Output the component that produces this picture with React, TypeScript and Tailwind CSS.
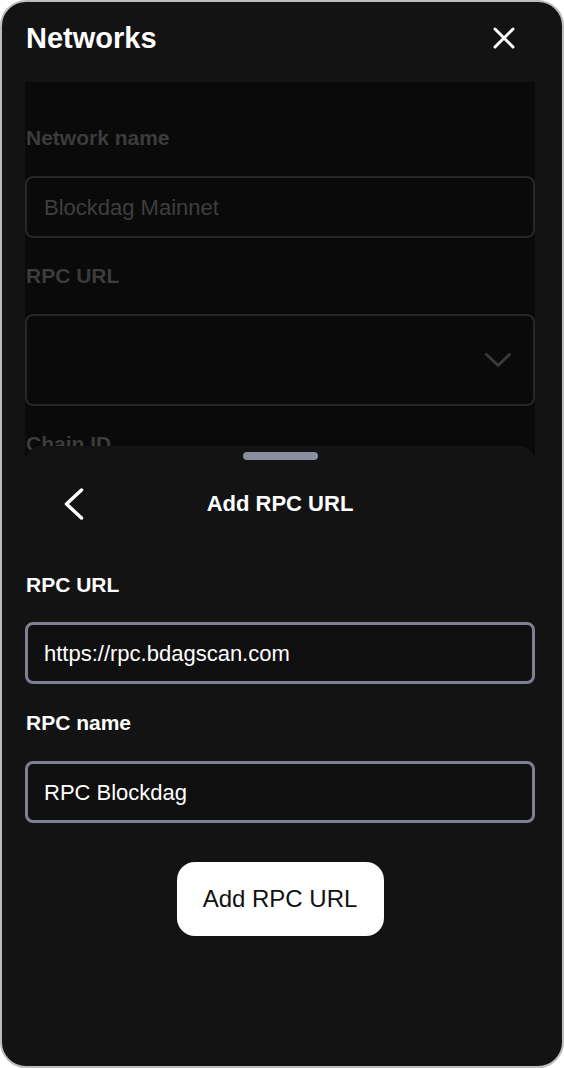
import React from 'react'

const font = { fontFamily: '"Liberation Sans", Arial, sans-serif' }

function CloseIcon() {
  return (
    <svg width="24" height="24" viewBox="0 0 24 24" fill="none" stroke="white" strokeWidth={3} strokeLinecap="round">
      <path d="M3 3 L21 21 M21 3 L3 21" />
    </svg>
  )
}

function BackIcon() {
  return (
    <svg width="22" height="34" viewBox="0 0 22 34" fill="none" stroke="white" strokeWidth={3.5} strokeLinecap="round" strokeLinejoin="round">
      <path d="M18.5 3 L3.5 17 L18.5 31" />
    </svg>
  )
}

function ChevronDown() {
  return (
    <svg width="28" height="16" viewBox="0 0 28 16" fill="none" stroke="#3a3a3c" strokeWidth={3} strokeLinecap="round" strokeLinejoin="round">
      <path d="M2.5 2.5 L14 13.5 L25.5 2.5" />
    </svg>
  )
}

export default function App() {
  return (
    <div className="w-[564px] h-[1068px] bg-white" style={font}>
      <div className="h-full rounded-[26px] border-2 border-[#bdbdbd] bg-[#131313] pl-[23px] pr-[27px] overflow-hidden">
        {/* Encabezado */}
        <header className="h-[48px] mt-[12px] flex items-center justify-between">
          <h1 className="text-[29px] font-bold text-white leading-none pl-[1px]">Networks</h1>
          <div className="mr-[19px] flex items-center">
            <CloseIcon />
          </div>
        </header>

        {/* Formulario de fondo (atenuado) */}
        <div className="mt-[20px] h-[378px] bg-[#0a0a0a] overflow-hidden pt-[43px]">
          <p className="text-[21px] leading-[26px] font-bold text-[#3c3c3c] pl-[1px]">Network name</p>
          <div className="mt-[25px] h-[62px] rounded-lg border-2 border-[#26272a] flex items-center px-[17px]">
            <span className="text-[22px] text-[#3e3e3e]">Blockdag Mainnet</span>
          </div>
          <p className="mt-[25px] text-[21px] leading-[26px] font-bold text-[#3c3c3c] pl-[1px]">RPC URL</p>
          <div className="mt-[25px] h-[92px] rounded-lg border-2 border-[#26272a] flex items-center justify-end pr-[21px]">
            <ChevronDown />
          </div>
          <p className="mt-[25px] text-[21px] leading-[26px] font-bold text-[#3c3c3c] pl-[1px]">Chain ID</p>
        </div>

        {/* Hoja inferior */}
        <div className="relative -mt-[14px] rounded-t-[16px] bg-[#131313] pt-[6px]">
          <div className="mx-auto w-[75px] h-2 rounded-full bg-[#8a8ea0]" />

          <div className="mt-[22px] h-[44px] grid grid-cols-[1fr_auto_1fr] items-center">
            <div className="pl-[38px] flex items-center">
              <BackIcon />
            </div>
            <h2 className="text-[22px] font-bold text-white leading-none">Add RPC URL</h2>
            <div />
          </div>

          <p className="mt-[46px] text-[21px] leading-[26px] font-bold text-white pl-[1px]">RPC URL</p>
          <div className="mt-[24px] h-[62px] rounded-lg border-[3px] border-[#7c8091] bg-[#0f0f10] flex items-center px-[16px]">
            <span className="text-[22px] text-white">https://rpc.bdagscan.com</span>
          </div>

          <p className="mt-[26px] text-[21px] leading-[26px] font-bold text-white pl-[1px]">RPC name</p>
          <div className="mt-[25px] h-[62px] rounded-lg border-[3px] border-[#7c8091] bg-[#0f0f10] flex items-center px-[16px]">
            <span className="text-[22px] text-white">RPC Blockdag</span>
          </div>

          <div className="mt-[39px] flex justify-center">
            <button className="w-[207px] h-[74px] rounded-[18px] bg-white text-[24px] text-[#111111]">
              Add RPC URL
            </button>
          </div>
        </div>
      </div>
    </div>
  )
}
